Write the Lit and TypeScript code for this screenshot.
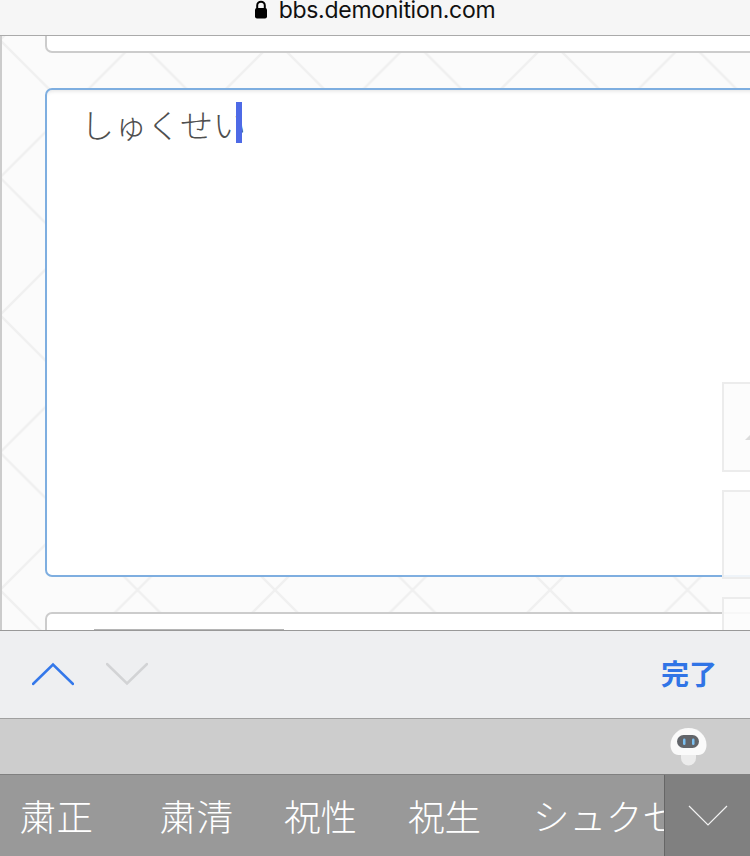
import { LitElement, html, css, svg } from "lit";
import { customElement } from "lit/decorators.js";

const SANS = `"Noto Sans CJK JP", "Noto Sans", sans-serif`;

@customElement("app-root")
export class AppRoot extends LitElement {
  static styles = css`
    :host { display: flex; flex-direction: column; width: 750px; height: 856px; overflow: hidden; font-family: ${css([SANS] as any)}; }
    .url { flex: none; height: 35px; box-sizing: content-box; background: #f6f6f6; border-bottom: 1px solid #aaaaaa; display: flex; justify-content: center; align-items: flex-start; gap: 11px; overflow: hidden; padding-right: 1px; }
    .url svg { width: 14px; height: 20px; margin-top: 0; flex: none; }
    .url span { font: 23px/20px Inter, "Liberation Sans", sans-serif; letter-spacing: -0.28px; color: #111; }
    .page { flex: 1; min-height: 0; position: relative; overflow: hidden; background: #fbfbfb; border-left: 2px solid #cccccc; display: flex; flex-direction: column; padding-left: 43px; }
    .lattice { position: absolute; left: -2px; top: -36px; width: 750px; height: 856px; }
    .card { position: relative; flex: none; width: 760px; box-sizing: border-box; background: #fff; border: 2px solid #cccccc; border-radius: 7px; }
    .prev { height: 18px; margin-top: -1px; border-top: none; border-top-left-radius: 0; border-top-right-radius: 0; }
    .editor { height: 489px; margin-top: 35px; border-color: #7eaee0; box-shadow: inset 0 4px 4px -3px rgba(0,0,0,.12); padding: 13px 0 0 34px; display: flex; align-items: flex-start; }
    .typed { font-size: 33px; line-height: 42px; font-weight: 300; color: #4f4f4f; white-space: nowrap; }
    .caret { width: 6px; height: 41px; margin-left: -10px; background: #4e6ae6; flex: none; position: relative; top: -1px; }
    .next { height: 40px; margin-top: 35px; }
    .next i { display: block; width: 190px; height: 1px; background: #b5b5b5; margin: 15px 0 0 47px; }
    .tool { position: absolute; left: 720px; width: 40px; box-sizing: border-box; border: 2px solid #ececec; background: rgba(252,252,252,.9); }
    .t1 { top: 346px; height: 90px; }
    .t2 { top: 454px; height: 89px; }
    .t3 { top: 561px; height: 60px; }
    .t1::after { content: ""; position: absolute; left: 21px; top: 44px; border: 6px solid transparent; border-bottom-color: #dcdcdc; border-right-color: #dcdcdc; }
    .toolbar { flex: none; height: 87px; background: #eeeff1; border-top: 1px solid #999; display: flex; align-items: center; padding: 0 33px 0 32px; gap: 32px; }
    .toolbar svg { width: 42px; height: 24px; flex: none; margin-top: -2px; }
    .done { margin-left: auto; font-size: 28px; line-height: 34px; font-weight: 700; color: #3074e6; margin-top: -3px; letter-spacing: 0; }
    .assist { flex: none; height: 55px; background: #cdcdcd; border-top: 1px solid #a0a0a0; display: flex; justify-content: flex-end; padding-right: 42px; }
    .assist svg { width: 38px; height: 40px; margin-top: 8px; }
    .cands { flex: none; height: 81px; background: #999; border-top: 1px solid #808080; display: flex; overflow: hidden; position: relative; }
    .cand { position: absolute; top: 16px; color: #fff; font-size: 36.5px; line-height: 50px; font-weight: 300; white-space: nowrap; }
    .more { position: absolute; right: 0; top: 0; bottom: 0; width: 86px; background: #808080; border-left: 1px solid #666; display: flex; align-items: center; justify-content: center; box-sizing: border-box; }
    .more svg { width: 40px; height: 22px; margin-left: 0; }
  `;

  render() {
    const cands: [string, number][] = [["粛正", 20], ["粛清", 160], ["祝性", 284], ["祝生", 408], ["シュクセイ", 533]];
    return html`
      <div class="url">
        <svg viewBox="0 0 14 20"><path d="M3.2 9V5.5a3.8 3.8 0 0 1 7.6 0V9" fill="none" stroke="#000" stroke-width="2"/><rect x="1" y="8" width="12" height="10.5" rx="2" fill="#000"/></svg>
        <span>bbs.demonition.com</span>
      </div>
      <div class="page">
        <svg class="lattice">
          <defs>
            <pattern id="p" width="137.5" height="137.5" patternUnits="userSpaceOnUse" x="0" y="40">
              ${svg`<path d="M-10 -10L147.5 147.5M-10 147.5L147.5 -10" stroke="#f0f0f0" stroke-width="2.5" fill="none"/>`}
            </pattern>
          </defs>
          <rect width="750" height="856" fill="url(#p)"/>
        </svg>
        <div class="card prev"></div>
        <div class="card editor"><span class="typed">しゅくせい</span><span class="caret"></span></div>
        <div class="card next"><i></i></div>
        <div class="tool t1"></div>
        <div class="tool t2"></div>
        <div class="tool t3"></div>
      </div>
      <div class="toolbar">
        <svg viewBox="0 0 42 24"><path d="M1 22L21 2.5L41 22" fill="none" stroke="#3478ea" stroke-width="2.5" stroke-linecap="round"/></svg>
        <svg viewBox="0 0 42 24"><path d="M1 2L21 21.5L41 2" fill="none" stroke="#d2d3d5" stroke-width="2.5" stroke-linecap="round"/></svg>
        <span class="done">完了</span>
      </div>
      <div class="assist">
        <svg viewBox="0 0 38 40">
          <path d="M11 24h15v7a7.5 7.5 0 0 1-15 0z" fill="#ececec"/>
          <path d="M18.5 1C8.5 1 .5 8.5 .5 18c0 6 3.5 10 8 10h20c4.5 0 8-4 8-10C36.500 8.500 28.500 1 18.500 1z" fill="#fafafa"/>
          <rect x="7" y="8" width="22" height="13" rx="6.500" fill="#62656a"/>
          <rect x="13" y="11.500" width="2.500" height="6.500" rx="1.250" fill="#7cc0f0"/>
          <rect x="22" y="11.500" width="2.500" height="6.500" rx="1.250" fill="#7cc0f0"/>
        </svg>
      </div>
      <div class="cands">
        ${cands.map(([t, x]) => html`<span class="cand" style="left:${x}px">${t}</span>`)}
        <div class="more"><svg viewBox="0 0 40 22"><path d="M1 1L20 20L39 1" fill="none" stroke="#f2f2f2" stroke-width="1.2"/></svg></div>
      </div>
    `;
  }
}
